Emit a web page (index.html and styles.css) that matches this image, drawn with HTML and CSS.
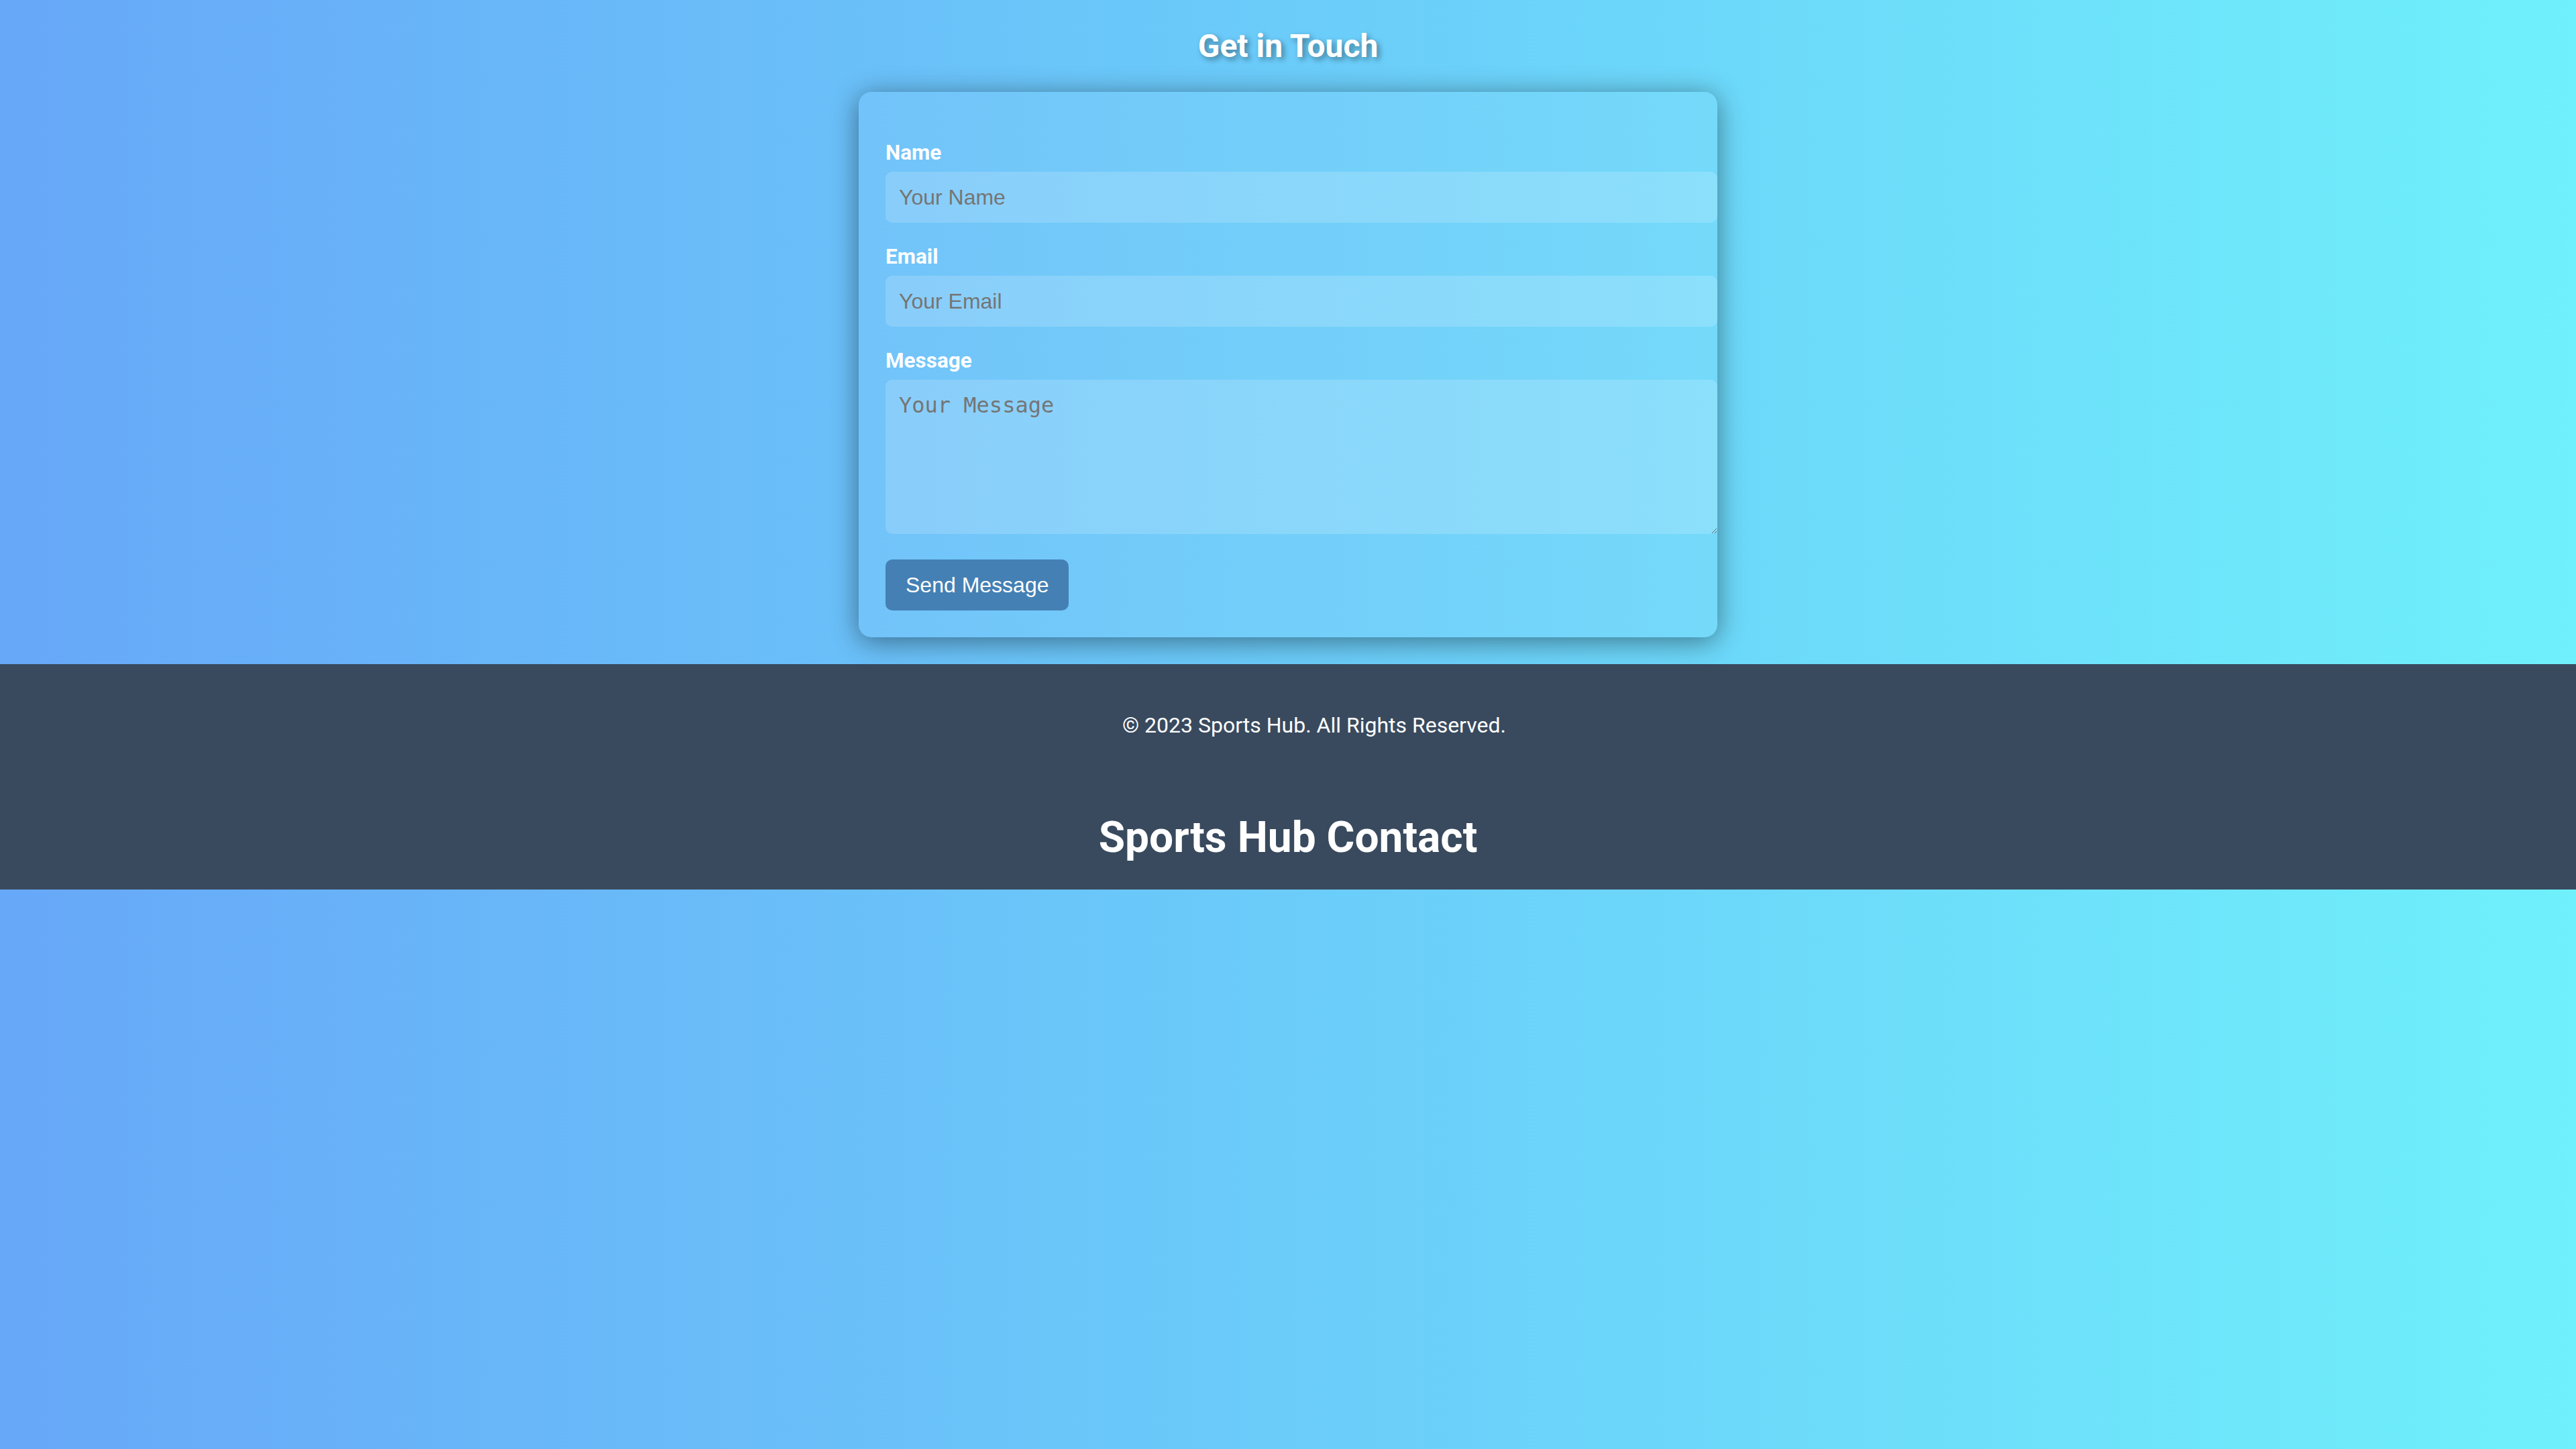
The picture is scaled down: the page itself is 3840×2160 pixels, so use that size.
FILE: index.html
```html
<!DOCTYPE html>
<html lang="en">
<head>
<meta charset="utf-8">
<title>Sports Hub Contact</title>
<link rel="stylesheet" href="styles.css">
</head>
<body>
<main class="main">
  <h2 class="title">Get in Touch</h2>
  <form class="card">
    <div class="field">
      <label class="label" for="name">Name</label>
      <input class="input" id="name" type="text" placeholder="Your Name">
    </div>
    <div class="field">
      <label class="label" for="email">Email</label>
      <input class="input" id="email" type="email" placeholder="Your Email">
    </div>
    <div class="field">
      <label class="label" for="message">Message</label>
      <textarea class="textarea" id="message" placeholder="Your Message"></textarea>
    </div>
    <button class="button" type="button">Send Message</button>
  </form>
</main>
<footer class="footer">
  <p class="copy">© 2023 Sports Hub. All Rights Reserved.</p>
  <h1 class="footer-title">Sports Hub Contact</h1>
</footer>
</body>
</html>
```
FILE: styles.css
```css
html, body {
  margin: 0;
  padding: 0;
}
body {
  min-height: 2160px;
  background: linear-gradient(to right, #67a8f8, #6ff0fb);
  font-family: Roboto, "Liberation Sans", sans-serif;
  color: #fff;
}
.main {
  display: flex;
  flex-direction: column;
  align-items: center;
  padding: 33px 0 40px;
}
.title {
  margin: 0 0 32px;
  font-size: 48px;
  line-height: 72px;
  font-weight: 700;
  color: #fff;
  text-shadow: 4px 4px 8px rgba(0, 0, 0, 0.4);
}
.card {
  width: 1200px;
  padding: 68px 40px 40px;
  background: rgba(255, 255, 255, 0.06);
  border-radius: 19px;
  box-shadow: 0 6px 40px rgba(0, 0, 0, 0.45);
}
.field {
  margin-bottom: 28px;
}
.label {
  display: block;
  margin-bottom: 5px;
  font-size: 31.5px;
  line-height: 46px;
  font-weight: 700;
  color: #fff;
}
.input,
.textarea {
  display: block;
  box-sizing: content-box;
  width: 100%;
  margin: 0;
  padding: 20px;
  border: 0;
  border-radius: 10px;
  background: rgba(255, 255, 255, 0.17);
  color: #222;
  outline: none;
}
.input {
  height: 36px;
  font-family: "Liberation Sans", Arial, sans-serif;
  font-size: 32px;
}
.textarea {
  height: 190px;
  font-family: "DejaVu Sans Mono", monospace;
  font-size: 32px;
  line-height: 37px;
}
.input::placeholder,
.textarea::placeholder {
  color: #757575;
}
.field:last-of-type {
  margin-bottom: 38px;
}
.button {
  display: block;
  height: 76px;
  padding: 0 30px;
  border: 0;
  border-radius: 10px;
  background: #4480b4;
  color: #fff;
  font-family: "Liberation Sans", Arial, sans-serif;
  font-size: 32px;
  cursor: pointer;
}
.footer {
  background: #394a5e;
  padding: 68px 0 39px;
  text-align: center;
  color: #fff;
}
.copy {
  margin: 0 0 106px;
  padding-left: 78px;
  font-size: 32px;
  line-height: 46px;
  font-weight: 400;
}
.footer-title {
  margin: 0;
  font-size: 64px;
  line-height: 77px;
  font-weight: 700;
}
```
